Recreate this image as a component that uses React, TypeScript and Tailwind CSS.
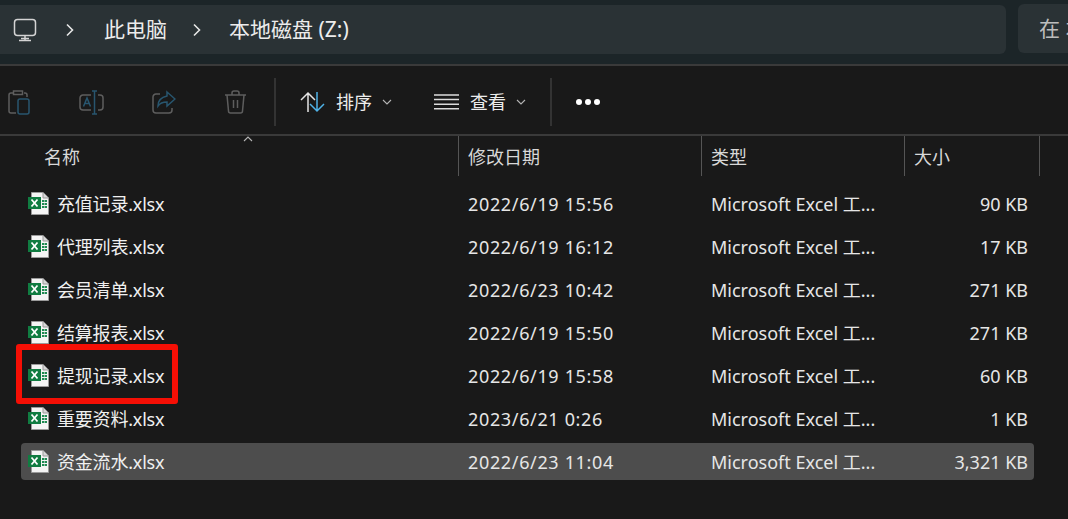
import React from "react";

const font = { fontFamily: '"Noto Sans", "Noto Sans CJK SC", sans-serif' };

const rows = [
  ["充值记录.xlsx", "2022/6/19 15:56", "90 KB"],
  ["代理列表.xlsx", "2022/6/19 16:12", "17 KB"],
  ["会员清单.xlsx", "2022/6/23 10:42", "271 KB"],
  ["结算报表.xlsx", "2022/6/19 15:50", "271 KB"],
  ["提现记录.xlsx", "2022/6/19 15:58", "60 KB"],
  ["重要资料.xlsx", "2023/6/21 0:26", "1 KB"],
  ["资金流水.xlsx", "2022/6/23 11:04", "3,321 KB"],
];

function Excel() {
  return (
    <svg width="21" height="23" viewBox="0 0 21 23" className="shrink-0">
      <path d="M3.5 .5H15L20.5 6V22.5H3.5Z" fill="#f4f4f4" stroke="#9a9a9a" />
      <path d="M15 .5V6H20.5" fill="#d8d8d8" stroke="#9a9a9a" />
      <path d="M14 8h2.500v2H14zM17 8h2v2h-2zM14 11h2.500v2H14zM17 11h2v2h-2zM14 14h2.500v2H14zM17 14h2v2h-2z" fill="#1f8a52" />
      <rect x="0" y="5" width="13" height="12" fill="#107c41" />
      <path d="M3.500 7.500L9.500 14.500M9.500 7.500L3.500 14.500" stroke="#fff" strokeWidth="1.800" />
    </svg>
  );
}

function Chevron() {
  return (
    <svg width="10" height="6" viewBox="0 0 10 6" fill="none" stroke="#b5b5b5" strokeWidth="1.100">
      <path d="M1 1l4 4 4-4" />
    </svg>
  );
}

function Crumb() {
  return (
    <svg width="10" height="14" viewBox="0 0 10 14" fill="none" stroke="#e6e6e6" strokeWidth="1.600">
      <path d="M2 1.500L7.500 7 2 12.500" />
    </svg>
  );
}

export default function App() {
  return (
    <div className="relative w-[1068px] h-[519px] overflow-hidden bg-[#191919] text-[#ececec]" style={font}>
      {/* address bar */}
      <div className="h-[64px] bg-[#1c2528] flex items-start pt-[4px] gap-[12px]">
        <div className="w-[1006px] h-[49px] shrink-0 mt-[1px] bg-[#2a3235] rounded-r-md flex items-center pl-[13px] text-[21px]">
          <svg width="24" height="24" viewBox="0 0 24 24" fill="none" stroke="#d4d4d4" strokeWidth="1.500" className="mr-[28px]">
            <rect x="1.500" y="1.500" width="21" height="16" rx="3" />
            <path d="M12 17.500V22M6 22.500H18M8 20.500H16" />
          </svg>
          <Crumb />
          <span className="ml-[29px] mr-[25px] leading-none">此电脑</span>
          <Crumb />
          <span className="ml-[27px] leading-none">本地磁盘 (Z:)</span>
        </div>
        <div className="flex-1 h-[49px] bg-[#2a3235] rounded-l-md flex items-center pl-[21px] text-[21px] text-[#bdbdbd] whitespace-nowrap overflow-hidden">
          在 本
        </div>
      </div>

      {/* toolbar */}
      <div className="h-[72px] border-y-2 border-[#3a3a3a] bg-[#191919] flex items-center pt-[4px] text-[18px]">
        <div className="flex items-center w-[274px] pl-[8px] gap-[48px]">
          <svg width="23" height="25" viewBox="0 0 23 25" fill="none" strokeWidth="1.500">
            <path d="M5 3H3a2 2 0 0 0-2 2v16a2 2 0 0 0 2 2h5M16 3h1a2 2 0 0 1 2 2v2M5.500 1h9v3.500h-9z" stroke="#5e5e5e" />
            <rect x="10" y="9" width="11" height="15" rx="2" stroke="#28566f" />
          </svg>
          <svg width="25" height="25" viewBox="0 0 25 25" fill="none" strokeWidth="1.500">
            <path d="M12 5H4a3 3 0 0 0-3 3v9a3 3 0 0 0 3 3h8M19 5h2a3 3 0 0 1 3 3v9a3 3 0 0 1-3 3h-2" stroke="#5e5e5e" />
            <path d="M15.500 1v23M13 1h5M13 24h5M4.500 16.500L8 8l3.500 8.500M5.800 13.500h4.500" stroke="#28566f" />
          </svg>
          <svg width="24" height="24" viewBox="0 0 24 24" fill="none" strokeWidth="1.500">
            <path d="M8 4H4a3 3 0 0 0-3 3v13a3 3 0 0 0 3 3h13a3 3 0 0 0 3-3v-2" stroke="#5e5e5e" />
            <path d="M15 2l8 7-8 7v-4c-4 0-7 1-9 4 0-6 4-9 9-10z" stroke="#28566f" />
          </svg>
          <svg width="23" height="24" viewBox="0 0 23 24" fill="none" stroke="#5e5e5e" strokeWidth="1.500">
            <path d="M1 5h21M8 5V3a2 2 0 0 1 2-2h3a2 2 0 0 1 2 2v2M3 5l1.500 16a2 2 0 0 0 2 2h10a2 2 0 0 0 2-2L20 5M9.500 10v8M13.500 10v8" />
          </svg>
        </div>
        <div className="w-[2px] h-[48px] bg-[#333333] shrink-0" />
        <div className="flex items-center ml-[24px]">
          <svg width="26" height="22" viewBox="0 0 26 22" fill="none" strokeWidth="1.500">
            <path d="M8 21V2M1 9l7-7 7 7" stroke="#e4e4e4" />
            <path d="M17 1v19M10 13l7 7 7-7" stroke="#4fb3e8" />
          </svg>
          <span className="ml-[10px] w-[36px] leading-none">排序</span>
          <span className="ml-[10px] flex"><Chevron /></span>
        </div>
        <div className="flex items-center ml-[42px]">
          <svg width="25" height="16" viewBox="0 0 25 16" fill="none" stroke="#dcdcdc" strokeWidth="1.500">
            <path d="M0 1h25M0 5.600h25M0 10.200h25M0 14.800h25" />
          </svg>
          <span className="ml-[11px] w-[36px] leading-none">查看</span>
          <span className="ml-[10px] flex"><Chevron /></span>
        </div>
        <div className="w-[2px] h-[48px] bg-[#333333] shrink-0 ml-[24px]" />
        <div className="ml-[24px] flex gap-[3px]">
          <span className="w-[6px] h-[6px] rounded-full bg-white" />
          <span className="w-[6px] h-[6px] rounded-full bg-white" />
          <span className="w-[6px] h-[6px] rounded-full bg-white" />
        </div>
      </div>

      {/* header */}
      <div className="relative flex h-[40px] text-[18px] text-[#d8d8d8]">
        <div className="w-[459px] pl-[44px] pt-[3px] flex items-center border-r border-[#555555]">名称</div>
        <div className="w-[243px] pl-[9px] pt-[3px] flex items-center border-r border-[#555555]">修改日期</div>
        <div className="w-[203px] pl-[9px] pt-[3px] flex items-center border-r border-[#555555]">类型</div>
        <div className="w-[135px] pl-[9px] pt-[3px] flex items-center border-r border-[#555555]">大小</div>
        <svg width="10" height="6" viewBox="0 0 10 6" fill="none" stroke="#b5b5b5" strokeWidth="1.100" className="absolute left-[243px] top-0">
          <path d="M1 5l4-4 4 4" />
        </svg>
      </div>

      {/* rows */}
      <div className="ml-[21px] w-[1013px] mt-[9px] flex flex-col gap-[6px] text-[18px] text-[#e6e6e6]">
        {rows.map((r, i) => (
          <div key={r[0]} className={`flex items-center h-[37px] rounded-sm ${i === 6 ? "bg-[#4d4d4d]" : ""}`}>
            <div className="w-[438px] pl-[7px] flex items-center shrink-0 whitespace-nowrap">
              <Excel />
              <span className="ml-[8px] pt-[2px] text-[#f0f0f0] tracking-[-0.2px]">{r[0]}</span>
            </div>
            <div className="w-[243px] pl-[9px] pt-[2px] shrink-0 whitespace-nowrap tracking-[0.65px]">{r[1]}</div>
            <div className="w-[203px] pl-[9px] pt-[2px] shrink-0 whitespace-nowrap">Microsoft Excel 工...</div>
            <div className="flex-1 text-right pr-[6px] pt-[2px] whitespace-nowrap">{r[2]}</div>
          </div>
        ))}
      </div>

      {/* red annotation */}
      <div className="absolute left-[16px] top-[344px] w-[162px] h-[60px] border-[6px] border-[#f50f05] rounded-[3px]" />
    </div>
  );
}
